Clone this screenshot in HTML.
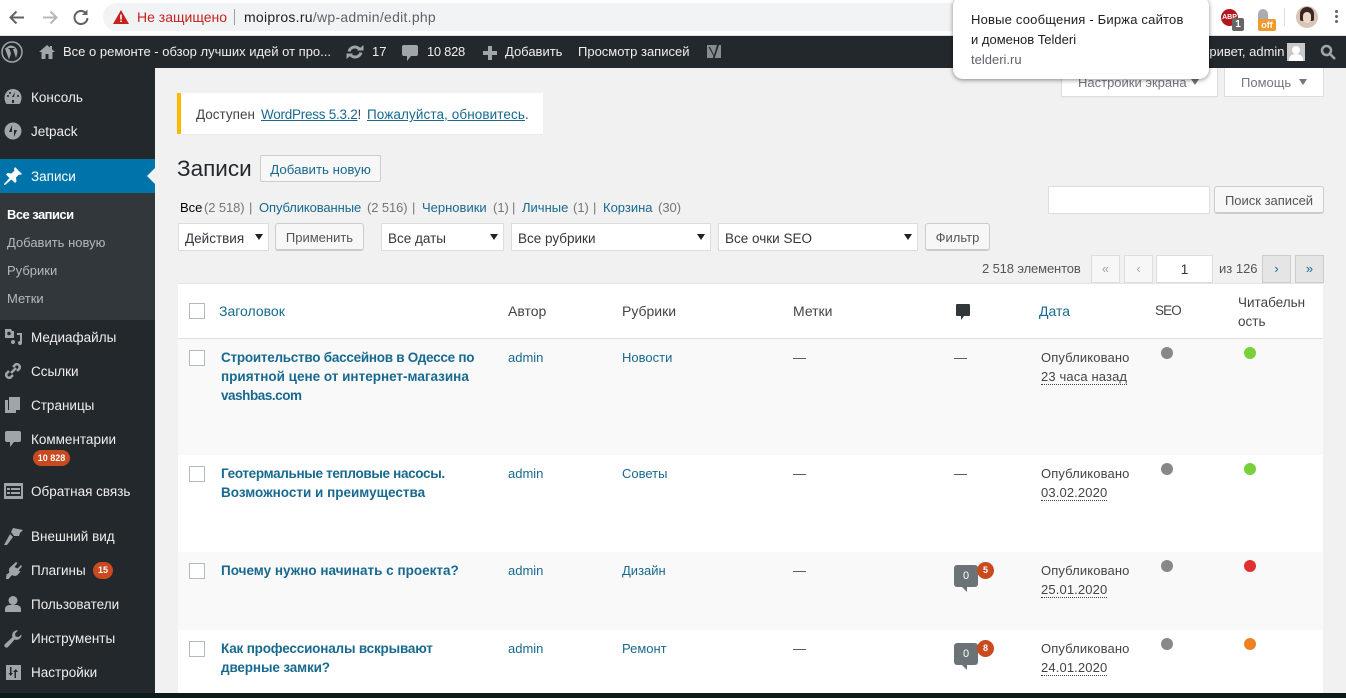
<!DOCTYPE html>
<html lang="ru"><head><meta charset="utf-8"><title>Записи</title>
<style>
html,body{margin:0;padding:0;width:1346px;height:698px;overflow:hidden;background:#f1f1f1;font-family:"Liberation Sans",sans-serif;font-size:13px;color:#444}
.t{position:absolute;white-space:nowrap;line-height:18px}
.b{position:absolute;box-sizing:border-box}
.s{position:absolute;left:31px;color:#eee;font-size:13.5px;line-height:18px;white-space:nowrap}
.sub{position:absolute;left:7px;color:#b4b9be;font-size:13px;line-height:18px;white-space:nowrap}
.top{position:absolute;color:#eee;font-size:13px;line-height:18px;white-space:nowrap;top:43px}
a{color:#17698f}
.l{color:#17698f}
.g{color:#72777c}
.tl{color:#17698f;font-weight:bold;font-size:13.5px;line-height:19px;position:absolute;left:221px;white-space:nowrap}
.cb{position:absolute;left:189px;width:16px;height:16px;box-sizing:border-box;border:1px solid #b4b9be;background:#fff}
.sel{position:absolute;top:223px;height:28px;box-sizing:border-box;background:#fff;border:1px solid #ddd;padding-left:6px;line-height:29px;font-size:13.5px;color:#32373c;white-space:nowrap}
.sel:after{content:"";position:absolute;right:5px;top:10px;border:4px solid transparent;border-top:6px solid #222;border-bottom:0}
.btn{position:absolute;box-sizing:border-box;background:#f7f7f7;border:1px solid #ccc;border-bottom-width:2px;border-radius:3px;color:#555;text-align:center;font-size:13px;white-space:nowrap}
.pg{position:absolute;top:255px;width:29px;height:28px;box-sizing:border-box;border:1px solid #ddd;background:#f7f7f7;color:#a0a5aa;text-align:center;line-height:25px;font-size:13px}
.pg.on{background:#e5e5e5;border-color:#ccc;color:#17698f}
.dot{position:absolute;width:12px;height:12px;border-radius:50%}
.bub{position:absolute;left:954px;width:24px;height:22px;background:#6c7377;border-radius:3px;color:#fff;text-align:center;font-size:11px;line-height:22px}
.bub:after{content:"";position:absolute;left:8px;top:22px;border-top:5px solid #6c7377;border-left:0 solid transparent;border-right:5px solid transparent;transform:scaleX(-1)}
.cnt{position:absolute;left:977px;width:17px;height:17px;border-radius:50%;background:#ca4a1f;color:#fff;text-align:center;font-size:9px;font-weight:bold;line-height:17px}
.d{border-bottom:1px dotted #444;line-height:14px;display:inline-block}
.h{font-size:14px}
svg.i{position:absolute;fill:#a0a5aa}
</style></head><body>

<!-- Chrome toolbar -->
<div class="b" style="left:0;top:0;width:1346px;height:36px;background:#fff;border-bottom:1px solid #dfe1e5"></div>
<svg class="i" style="left:8px;top:9px;fill:none;stroke:#5f6368;stroke-width:2" width="18" height="18" viewBox="0 0 18 18"><path d="M16 8.500H3M8.500 2.500L2.500 8.500l6 6"/></svg>
<svg class="i" style="left:41px;top:9px;fill:none;stroke:#b5b8bb;stroke-width:2" width="18" height="18" viewBox="0 0 18 18"><path d="M2 8.500h13M9.500 2.500l6 6-6 6"/></svg>
<svg class="i" style="left:72px;top:8px;fill:none;stroke:#5f6368;stroke-width:2" width="18" height="18" viewBox="0 0 18 18"><path d="M14.500 6A6.500 6.500 0 1 0 15.500 10"/><path d="M15.500 1.500v5.500h-5.500" fill="#5f6368" stroke="none"/></svg>
<div class="b" style="left:103px;top:3px;width:860px;height:28px;background:#f1f3f4;border-radius:14px 0 0 14px"></div>
<svg class="i" style="left:113px;top:10px;fill:#c5221f" width="16" height="14" viewBox="0 0 16 14"><path d="M8 0l8 14H0z"/><path d="M7.200 4.500h1.600v5H7.200zM7.200 10.500h1.600v1.500H7.200z" fill="#fff"/></svg>
<div class="t" style="left:137px;top:8px;color:#c5221f;font-size:14px">Не защищено</div>
<div class="b" style="left:234px;top:9px;width:1px;height:16px;background:#9aa0a6"></div>
<div class="t" style="left:244px;top:8px;font-size:14px;letter-spacing:.27px;color:#5f6368"><span style="color:#202124">moipros.ru</span>/wp-admin/edit.php</div>

<!-- extensions -->
<div class="b" style="left:1221px;top:9px;width:17px;height:17px;border-radius:50%;background:#b3161d;color:#fff;font-size:7px;font-weight:bold;line-height:17px;text-align:center">ABP</div>
<div class="b" style="left:1232px;top:18px;width:12px;height:13px;border-radius:2px;background:#666;color:#fff;font-size:10px;font-weight:bold;line-height:13px;text-align:center">1</div>
<div class="b" style="left:1258px;top:9px;width:10px;height:12px;border-radius:5px 5px 0 0;background:#a7adb3"></div>
<div class="b" style="left:1258px;top:19px;width:18px;height:12px;border-radius:2px;background:#ee9a2c;color:#fff;font-size:9px;font-weight:bold;line-height:12px;text-align:center">off</div>
<div class="b" style="left:1284px;top:8px;width:1px;height:18px;background:#dadce0"></div>
<div class="b" style="left:1296px;top:6px;width:22px;height:22px;border-radius:50%;background:#d9c4b8;overflow:hidden"><div class="b" style="left:4px;top:1px;width:14px;height:14px;border-radius:7px 7px 2px 2px;background:#3a2722"></div><div class="b" style="left:7px;top:6px;width:8px;height:11px;border-radius:4px;background:#f0d8c8"></div></div>
<div class="b" style="left:1335px;top:10px;width:3px;height:3px;border-radius:50%;background:#5f6368;box-shadow:0 5px 0 #5f6368,0 10px 0 #5f6368"></div>

<!-- Admin bar -->
<div class="b" style="left:0;top:36px;width:1346px;height:32px;background:#23282d"></div>
<svg class="i" style="left:1px;top:41px" width="22" height="22" viewBox="0 0 22 22"><circle cx="11" cy="11" r="10" fill="none" stroke="#a0a5aa" stroke-width="1.500"/><path d="M4 7.500l4 11 2-6-1.500-4.500H7.500V7h6v1h-1.500l3 9 1-3.500c.8-2.500.5-4.500-1-6.500H15c-2-2.500-6-3-8-1.500z"/></svg>
<svg class="i" style="left:39px;top:44px" width="16" height="16" viewBox="0 0 16 16"><path d="M8 1L0 8h2.500v7h4v-5h3v5h4V8H16l-3-2.700V2h-2v1.500z"/></svg>
<div class="top" style="left:63px;">Все о ремонте - обзор лучших идей от про...</div>
<svg class="i" style="left:346px;top:44px;fill:none;stroke:#a0a5aa;stroke-width:3" width="18" height="16" viewBox="0 0 18 16"><path d="M3 7.500A6 6 0 0 1 14 6M15 8.500A6 6 0 0 1 4 10"/><path d="M11 6.500h6.500V1zM7 9.500H.5V15z" fill="#a0a5aa" stroke="none"/></svg>
<div class="top" style="left:372px">17</div>
<svg class="i" style="left:402px;top:45px" width="16" height="17" viewBox="0 0 16 17"><path d="M2 0h12a2 2 0 0 1 2 2v7a2 2 0 0 1-2 2H9l-4 5v-5H2a2 2 0 0 1-2-2V2a2 2 0 0 1 2-2z"/></svg>
<div class="top" style="left:427px;letter-spacing:-.3px">10 828</div>
<svg class="i" style="left:483px;top:46px" width="14" height="14" viewBox="0 0 14 14"><path d="M5 0h4v5h5v4H9v5H5V9H0V5h5z"/></svg>
<div class="top" style="left:505px">Добавить</div>
<div class="top" style="left:578px">Просмотр записей</div>
<svg class="i" style="left:705px;top:42px" width="18" height="20" viewBox="0 0 18 20"><path d="M2 3h14v13H2z" opacity=".8"/><path d="M5 5l4 8 3-10 2 0-5 15H7l1.500-4L3.500 5z" fill="#23282d"/></svg>
<div class="top" style="left:1200px;">Привет, admin</div>
<div class="b" style="left:1287px;top:43px;width:18px;height:18px;background:#c9c9c9;overflow:hidden"><div class="b" style="left:5px;top:3px;width:8px;height:8px;border-radius:50%;background:#fff"></div><div class="b" style="left:2px;top:11px;width:14px;height:9px;border-radius:6px 6px 0 0;background:#fff"></div></div>
<svg class="i" style="left:1320px;top:44px;fill:none;stroke:#a0a5aa;stroke-width:2.500" width="16" height="16" viewBox="0 0 16 16"><circle cx="6.500" cy="6.500" r="4.500"/><path d="M10 10l5 5"/></svg>

<!-- Sidebar -->
<div class="b" style="left:0;top:68px;width:155px;height:625px;background:#23282d"></div>
<div class="b" style="left:0;top:159px;width:155px;height:34px;background:#0073aa"></div>
<div class="b" style="left:0;top:193px;width:155px;height:127px;background:#32373c"></div>
<div class="b" style="left:147px;top:168px;border:8px solid transparent;border-right-color:#f1f1f1;border-left:0"></div>

<svg class="i" style="left:4px;top:89px" width="18" height="16" viewBox="0 0 18 16"><path d="M9 0a8.500 8.500 0 0 1 8.500 8.500c0 2.700-.8 5-2 6.500h-13C1.300 13.500.500 11.200.500 8.500A8.500 8.500 0 0 1 9 0z"/><path d="M8 8l2 0 1-5-3 5zM8 11h2v3H8z" fill="#23282d"/><circle cx="4" cy="7" r="1" fill="#23282d"/><circle cx="14" cy="7" r="1" fill="#23282d"/><circle cx="6" cy="4" r="1" fill="#23282d"/></svg>
<div class="s" style="top:89px">Консоль</div>
<svg class="i" style="left:4px;top:122px" width="18" height="18" viewBox="0 0 18 18"><circle cx="9" cy="9" r="8.500"/><path d="M8 3v7H5zM10 15V8h3z" fill="#23282d"/></svg>
<div class="s" style="top:123px">Jetpack</div>
<svg class="i" style="left:4px;top:167px;fill:#fff" width="18" height="18" viewBox="0 0 18 18"><path d="M11 0l7 7-2 1-1-.500-3 3 .5 4-1.500 1.500-3.500-3.500L1 18l-1 0 0-1 5.500-6L2 7.500 3.500 6l4 .5 3-3L10 2z"/></svg>
<div class="s" style="top:168px;color:#fff">Записи</div>
<div class="sub" style="top:206px;color:#fff;font-weight:bold;letter-spacing:-.55px">Все записи</div>
<div class="sub" style="top:234px">Добавить новую</div>
<div class="sub" style="top:262px">Рубрики</div>
<div class="sub" style="top:290px">Метки</div>

<svg class="i" style="left:4px;top:329px" width="19" height="17" viewBox="0 0 19 17"><path d="M1 0h6l1 2h2v7H1z"/><circle cx="5" cy="4.500" r="1.800" fill="#23282d"/><path d="M13 4h5v10a2 2 0 1 1-2-2V6h-3zM9 11a2 2 0 1 1 0 4 2 2 0 0 1 0-4z"/></svg>
<div class="s" style="top:329px">Медиафайлы</div>
<svg class="i" style="left:4px;top:362px;fill:none;stroke:#a0a5aa;stroke-width:2.500" width="18" height="18" viewBox="0 0 18 18"><path d="M7 11l5-5M5 9l-2.500 2.500a3 3 0 0 0 4 4L9 13M9 5l2.500-2.500a3 3 0 0 1 4 4L13 9"/></svg>
<div class="s" style="top:363px">Ссылки</div>
<svg class="i" style="left:5px;top:397px" width="15" height="16" viewBox="0 0 15 16"><path d="M4 0h11v13H4z"/><path d="M0 3h3v10h8v3H0z"/></svg>
<div class="s" style="top:397px">Страницы</div>
<svg class="i" style="left:5px;top:431px" width="16" height="17" viewBox="0 0 16 17"><path d="M2 0h12a2 2 0 0 1 2 2v7a2 2 0 0 1-2 2H9l-4 5v-5H2a2 2 0 0 1-2-2V2a2 2 0 0 1 2-2z"/></svg>
<div class="s" style="top:431px">Комментарии</div>
<div class="b" style="left:33px;top:450px;width:37px;height:16px;border-radius:8px;background:#ca4a1f;color:#fff;font-size:9px;font-weight:bold;line-height:16px;text-align:center;white-space:nowrap">10 828</div>
<svg class="i" style="left:4px;top:483px" width="19" height="16" viewBox="0 0 19 16"><path d="M0 0h19v16H0z"/><path d="M2 3h15v10H2z" fill="#23282d"/><path d="M3 5h3v2H3zM7 5h9v2H7zM3 9h3v2H3zM7 9h9v2H7z"/></svg>
<div class="s" style="top:483px">Обратная связь</div>
<svg class="i" style="left:4px;top:527px" width="19" height="18" viewBox="0 0 19 18"><path d="M9 1l10 2-3 3-1 3-5 0-3-4zM6 7l3 3L3 18H0z"/></svg>
<div class="s" style="top:528px">Внешний вид</div>
<svg class="i" style="left:5px;top:562px" width="17" height="17" viewBox="0 0 17 17"><path d="M11 0l1.500 1-3 4 3 1.500L16 3l1 1.500-3.500 4 2 1-3 3.500c-2 1.500-4 1-5.500 0L3.500 17H1l.5-4.500 3-2C3.500 8.500 4 6 5.500 5z"/></svg>
<div class="s" style="top:562px">Плагины</div>
<div class="b" style="left:93px;top:562px;width:20px;height:17px;border-radius:9px;background:#ca4a1f;color:#fff;font-size:9px;font-weight:bold;line-height:17px;text-align:center">15</div>
<svg class="i" style="left:5px;top:596px" width="16" height="16" viewBox="0 0 16 16"><circle cx="8" cy="4.500" r="4.500"/><path d="M0 16v-3c0-2.500 2.500-4 4.500-4h7c2 0 4.500 1.500 4.500 4v3z"/></svg>
<div class="s" style="top:596px">Пользователи</div>
<svg class="i" style="left:4px;top:630px" width="18" height="18" viewBox="0 0 18 18"><path d="M17.500 4.500a5 5 0 0 1-6.800 5L4 17a2 2 0 0 1-3-3l7.500-6.700A5 5 0 0 1 14 .5l-3 3 .5 3 3 .5z"/></svg>
<div class="s" style="top:630px">Инструменты</div>
<svg class="i" style="left:6px;top:665px" width="15" height="15" viewBox="0 0 15 15"><path d="M0 0h15v15H0z"/><path d="M4 2h1.500v6H7l-2.200 3L2.500 8H4zM10 13H8.500V7H7l2.800-3L12 7h-2z" fill="#23282d"/></svg>
<div class="s" style="top:664px">Настройки</div>

<!-- Screen options -->
<div class="b" style="left:1061px;top:68px;width:157px;height:29px;background:#fff;border:1px solid #ddd;border-top:0;box-shadow:0 1px 1px rgba(0,0,0,.04)"></div>
<div class="t" style="left:1078px;top:74px;color:#72777c">Настройки экрана</div>
<div class="b" style="left:1191px;top:79px;border:4px solid transparent;border-top:6px solid #72777c;border-bottom:0"></div>
<div class="b" style="left:1224px;top:68px;width:100px;height:29px;background:#fff;border:1px solid #ddd;border-top:0"></div>
<div class="t" style="left:1241px;top:74px;color:#72777c">Помощь</div>
<div class="b" style="left:1299px;top:79px;border:4px solid transparent;border-top:6px solid #72777c;border-bottom:0"></div>

<!-- Notice -->
<div class="b" style="left:177px;top:93px;width:366px;height:41px;background:#fff;border-left:4px solid #ffb900;box-shadow:0 1px 1px rgba(0,0,0,.04)"></div>
<div class="t" style="left:196px;top:106px;font-size:13.5px;color:#444">Доступен</div>
<div class="t" style="left:261px;top:106px;font-size:13.5px;letter-spacing:-.25px"><a style="text-decoration:underline">WordPress 5.3.2</a>!</div>
<div class="t" style="left:367px;top:106px;font-size:13.5px;letter-spacing:.1px"><a style="text-decoration:underline">Пожалуйста, обновитесь</a>.</div>

<!-- Heading -->
<div class="t" style="left:177px;top:155px;font-size:22.5px;line-height:28px;color:#23282d">Записи</div>
<div class="b" style="left:260px;top:155px;width:121px;height:27px;background:#f7f7f7;border:1px solid #ccc;border-radius:2px;color:#17698f;text-align:center;line-height:28px;font-size:13.3px;white-space:nowrap">Добавить новую</div>

<!-- Search -->
<div class="b" style="left:1048px;top:186px;width:162px;height:28px;background:#fff;border:1px solid #ddd"></div>
<div class="btn" style="left:1214px;top:186px;width:110px;height:28px;line-height:27px">Поиск записей</div>

<!-- subsubsub -->
<div class="t" style="left:180px;top:199px;color:#000">Все</div>
<div class="t g" style="left:204px;top:199px;letter-spacing:-.1px">(2 518)</div>
<div class="t g" style="left:249px;top:199px">|</div>
<div class="t l" style="left:259px;top:199px;letter-spacing:-.1px">Опубликованные</div>
<div class="t g" style="left:367px;top:199px;letter-spacing:-.1px">(2 516)</div>
<div class="t g" style="left:412px;top:199px">|</div>
<div class="t l" style="left:422px;top:199px">Черновики</div>
<div class="t g" style="left:493px;top:199px">(1)</div>
<div class="t g" style="left:512px;top:199px">|</div>
<div class="t l" style="left:522px;top:199px">Личные</div>
<div class="t g" style="left:573px;top:199px">(1)</div>
<div class="t g" style="left:593px;top:199px">|</div>
<div class="t l" style="left:603px;top:199px">Корзина</div>
<div class="t g" style="left:658px;top:199px">(30)</div>

<!-- Filters -->
<div class="sel" style="left:178px;width:91px">Действия</div>
<div class="btn" style="left:275px;top:223px;width:89px;height:28px;line-height:27px">Применить</div>
<div class="sel" style="left:381px;width:123px">Все даты</div>
<div class="sel" style="left:511px;width:200px">Все рубрики</div>
<div class="sel" style="left:718px;width:200px">Все очки SEO</div>
<div class="btn" style="left:925px;top:223px;width:65px;height:28px;line-height:27px">Фильтр</div>

<!-- Pagination -->
<div class="t" style="left:982px;top:260px;color:#555;letter-spacing:-.13px">2 518 элементов</div>
<div class="pg" style="left:1091px">«</div>
<div class="pg" style="left:1124px">‹</div>
<div class="b" style="left:1156px;top:255px;width:57px;height:28px;background:#fff;border:1px solid #ddd;text-align:center;line-height:26px;font-size:14px;color:#32373c">1</div>
<div class="t" style="left:1219px;top:260px;color:#555">из 126</div>
<div class="pg on" style="left:1262px">›</div>
<div class="pg on" style="left:1295px">»</div>

<!-- Table -->
<div class="b" style="left:178px;top:283px;width:1145px;height:410px;background:#fff;border-top:1px solid #e5e5e5"></div>
<div class="b" style="left:178px;top:338px;width:1145px;height:1px;background:#e1e1e1"></div>
<div class="b" style="left:178px;top:339px;width:1145px;height:116px;background:#f9f9f9"></div>
<div class="b" style="left:178px;top:552px;width:1145px;height:78px;background:#f9f9f9"></div>

<div class="cb" style="top:303px"></div>
<div class="t l h" style="left:219px;top:302px">Заголовок</div>
<div class="t h" style="left:508px;top:302px">Автор</div>
<div class="t h" style="left:622px;top:302px">Рубрики</div>
<div class="t h" style="left:793px;top:302px">Метки</div>
<svg class="i" style="left:956px;top:304px;fill:#32373c" width="14" height="16" viewBox="0 0 14 16"><path d="M1 0h12a1 1 0 0 1 1 1v10a1 1 0 0 1-1 1H8l-3 4v-4H1a1 1 0 0 1-1-1V1a1 1 0 0 1 1-1z"/></svg>
<div class="t l h" style="left:1039px;top:302px">Дата</div>
<div class="t" style="left:1155px;top:302px;font-size:13.5px;letter-spacing:-.9px">SEO</div>
<div class="t" style="left:1238px;top:293px;font-size:13.5px;line-height:19px">Читабельн<br>ость</div>

<!-- Row 1 -->
<div class="cb" style="top:350px"></div>
<div class="tl" style="top:348px"><span style="letter-spacing:-.26px">Строительство бассейнов в Одессе по</span><br>приятной цене от интернет-магазина<br><span style="letter-spacing:-.45px">vashbas.com</span></div>
<div class="t l" style="left:508px;top:349px">admin</div>
<div class="t l" style="left:622px;top:349px">Новости</div>
<div class="t" style="left:793px;top:349px">—</div>
<div class="t" style="left:954px;top:349px">—</div>
<div class="t" style="left:1041px;top:348px;line-height:19px;letter-spacing:.13px">Опубликовано<br><span class="d">23 часа назад</span></div>
<div class="dot" style="left:1161px;top:347px;background:#888"></div>
<div class="dot" style="left:1244px;top:347px;background:#7ad03a"></div>

<!-- Row 2 -->
<div class="cb" style="top:466px"></div>
<div class="tl" style="top:464px"><span style="letter-spacing:-.33px">Геотермальные тепловые насосы.</span><br>Возможности и преимущества</div>
<div class="t l" style="left:508px;top:465px">admin</div>
<div class="t l" style="left:622px;top:465px">Советы</div>
<div class="t" style="left:793px;top:465px">—</div>
<div class="t" style="left:954px;top:465px">—</div>
<div class="t" style="left:1041px;top:464px;line-height:19px;letter-spacing:.13px">Опубликовано<br><span class="d">03.02.2020</span></div>
<div class="dot" style="left:1161px;top:463px;background:#888"></div>
<div class="dot" style="left:1244px;top:463px;background:#7ad03a"></div>

<!-- Row 3 -->
<div class="cb" style="top:563px"></div>
<div class="tl" style="top:561px">Почему нужно начинать с проекта?</div>
<div class="t l" style="left:508px;top:562px">admin</div>
<div class="t l" style="left:622px;top:562px">Дизайн</div>
<div class="t" style="left:793px;top:562px">—</div>
<div class="bub" style="top:565px">0</div><div class="cnt" style="top:562px">5</div>
<div class="t" style="left:1041px;top:561px;line-height:19px;letter-spacing:.13px">Опубликовано<br><span class="d">25.01.2020</span></div>
<div class="dot" style="left:1161px;top:560px;background:#888"></div>
<div class="dot" style="left:1244px;top:560px;background:#dc3232"></div>

<!-- Row 4 -->
<div class="cb" style="top:641px"></div>
<div class="tl" style="top:639px"><span style="letter-spacing:-.18px">Как профессионалы вскрывают</span><br><span style="letter-spacing:-.13px">дверные замки?</span></div>
<div class="t l" style="left:508px;top:640px">admin</div>
<div class="t l" style="left:622px;top:640px">Ремонт</div>
<div class="t" style="left:793px;top:640px">—</div>
<div class="bub" style="top:643px">0</div><div class="cnt" style="top:640px">8</div>
<div class="t" style="left:1041px;top:639px;line-height:19px;letter-spacing:.13px">Опубликовано<br><span class="d">24.01.2020</span></div>
<div class="dot" style="left:1161px;top:638px;background:#888"></div>
<div class="dot" style="left:1244px;top:638px;background:#ee8122"></div>

<!-- Bottom strip -->
<div class="b" style="left:0;top:693px;width:1346px;height:5px;background:#0e1a1a"></div>

<!-- Notification popup -->
<div class="b" style="left:953px;top:-4px;width:256px;height:83px;background:#fff;border-radius:10px;box-shadow:0 1px 5px rgba(0,0,0,.45)"></div>
<div class="t" style="left:971px;top:10px;font-size:13px;line-height:20px;color:#202124"><span style="letter-spacing:.2px">Новые сообщения - Биржа сайтов</span><br>и доменов Telderi<br><span style="color:#5f6368">telderi.ru</span></div>
</body></html>
